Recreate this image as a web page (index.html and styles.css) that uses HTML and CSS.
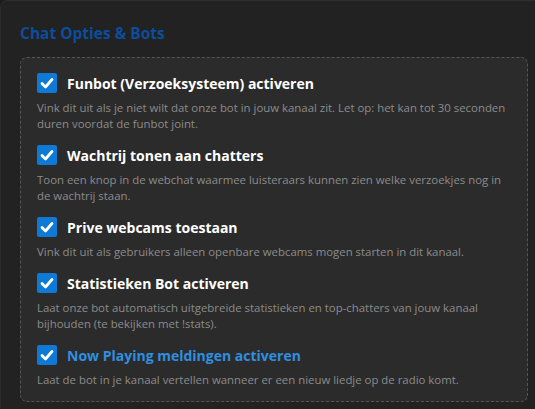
FILE: index.html
```html
<!DOCTYPE html>
<html lang="nl">
<head>
<meta charset="utf-8">
<title>Chat Opties &amp; Bots</title>
<link rel="stylesheet" href="styles.css">
</head>
<body>
<div class="card">
  <h2 class="card-title">Chat Opties &amp; Bots</h2>
  <div class="options">
    <div class="option">
      <label class="option-head">
        <span class="check"><svg viewBox="0 0 20 20"><path d="M5 10.5 L8.5 14 L15 6.5"/></svg></span>
        <span class="option-title">Funbot (Verzoeksysteem) activeren</span>
      </label>
      <p class="option-desc">Vink dit uit als je niet wilt dat onze bot in jouw kanaal zit. Let op: het kan tot 30 seconden duren voordat de funbot joint.</p>
    </div>
    <div class="option">
      <label class="option-head">
        <span class="check"><svg viewBox="0 0 20 20"><path d="M5 10.5 L8.5 14 L15 6.5"/></svg></span>
        <span class="option-title">Wachtrij tonen aan chatters</span>
      </label>
      <p class="option-desc">Toon een knop in de webchat waarmee luisteraars kunnen zien welke verzoekjes nog in de wachtrij staan.</p>
    </div>
    <div class="option">
      <label class="option-head">
        <span class="check"><svg viewBox="0 0 20 20"><path d="M5 10.5 L8.5 14 L15 6.5"/></svg></span>
        <span class="option-title">Prive webcams toestaan</span>
      </label>
      <p class="option-desc">Vink dit uit als gebruikers alleen openbare webcams mogen starten in dit kanaal.</p>
    </div>
    <div class="option">
      <label class="option-head">
        <span class="check"><svg viewBox="0 0 20 20"><path d="M5 10.5 L8.5 14 L15 6.5"/></svg></span>
        <span class="option-title">Statistieken Bot activeren</span>
      </label>
      <p class="option-desc">Laat onze bot automatisch uitgebreide statistieken en top-chatters van jouw kanaal bijhouden (te bekijken met !stats).</p>
    </div>
    <div class="option">
      <label class="option-head">
        <span class="check"><svg viewBox="0 0 20 20"><path d="M5 10.5 L8.5 14 L15 6.5"/></svg></span>
        <span class="option-title option-title-accent">Now Playing meldingen activeren</span>
      </label>
      <p class="option-desc">Laat de bot in je kanaal vertellen wanneer er een nieuw liedje op de radio komt.</p>
    </div>
  </div>
</div>
</body>
</html>
```
FILE: styles.css
```css
html, body {
  margin: 0;
  padding: 0;
  background: #1b1b1b;
  height: 100%;
  overflow: hidden;
}
body {
  font-family: "Open Sans", "Noto Sans", sans-serif;
}
.card {
  margin: 0;
  width: 560px;
  min-height: 420px;
  background: #222222;
  border-top: 1px solid #2e2e2e;
  border-left: 1px solid #2a2a2a;
  border-radius: 7px 0 0 0;
  padding: 22px 0 0 19px;
  box-sizing: border-box;
}
.card-title {
  margin: 0 0 14px 0;
  font-size: 15.5px;
  font-weight: 700;
  color: #0b4d9f;
  line-height: 20px;
}
.options {
  width: 508px;
  box-sizing: border-box;
  background: #2b2b2b;
  border: 1px dashed #555555;
  border-radius: 7px;
  padding: 14px 16px 13px 16px;
  display: flex;
  flex-direction: column;
  gap: 12px;
}
.option-head {
  display: flex;
  align-items: center;
  gap: 10px;
  height: 22px;
}
.check {
  width: 20px;
  height: 20px;
  border-radius: 2px;
  background: #0f79d6;
  display: flex;
  align-items: center;
  justify-content: center;
  flex: none;
}
.check svg {
  width: 20px;
  height: 20px;
}
.check path {
  fill: none;
  stroke: #ffffff;
  stroke-width: 2.8;
  stroke-linecap: round;
  stroke-linejoin: round;
}
.option-title {
  font-size: 14px;
  font-weight: 700;
  color: #ffffff;
}
.option-title-accent {
  color: #2f8fe0;
}
.option-desc {
  margin: 6px 0 0 0;
  font-size: 11.4px;
  line-height: 16px;
  color: #8c8c8c;
}
```
